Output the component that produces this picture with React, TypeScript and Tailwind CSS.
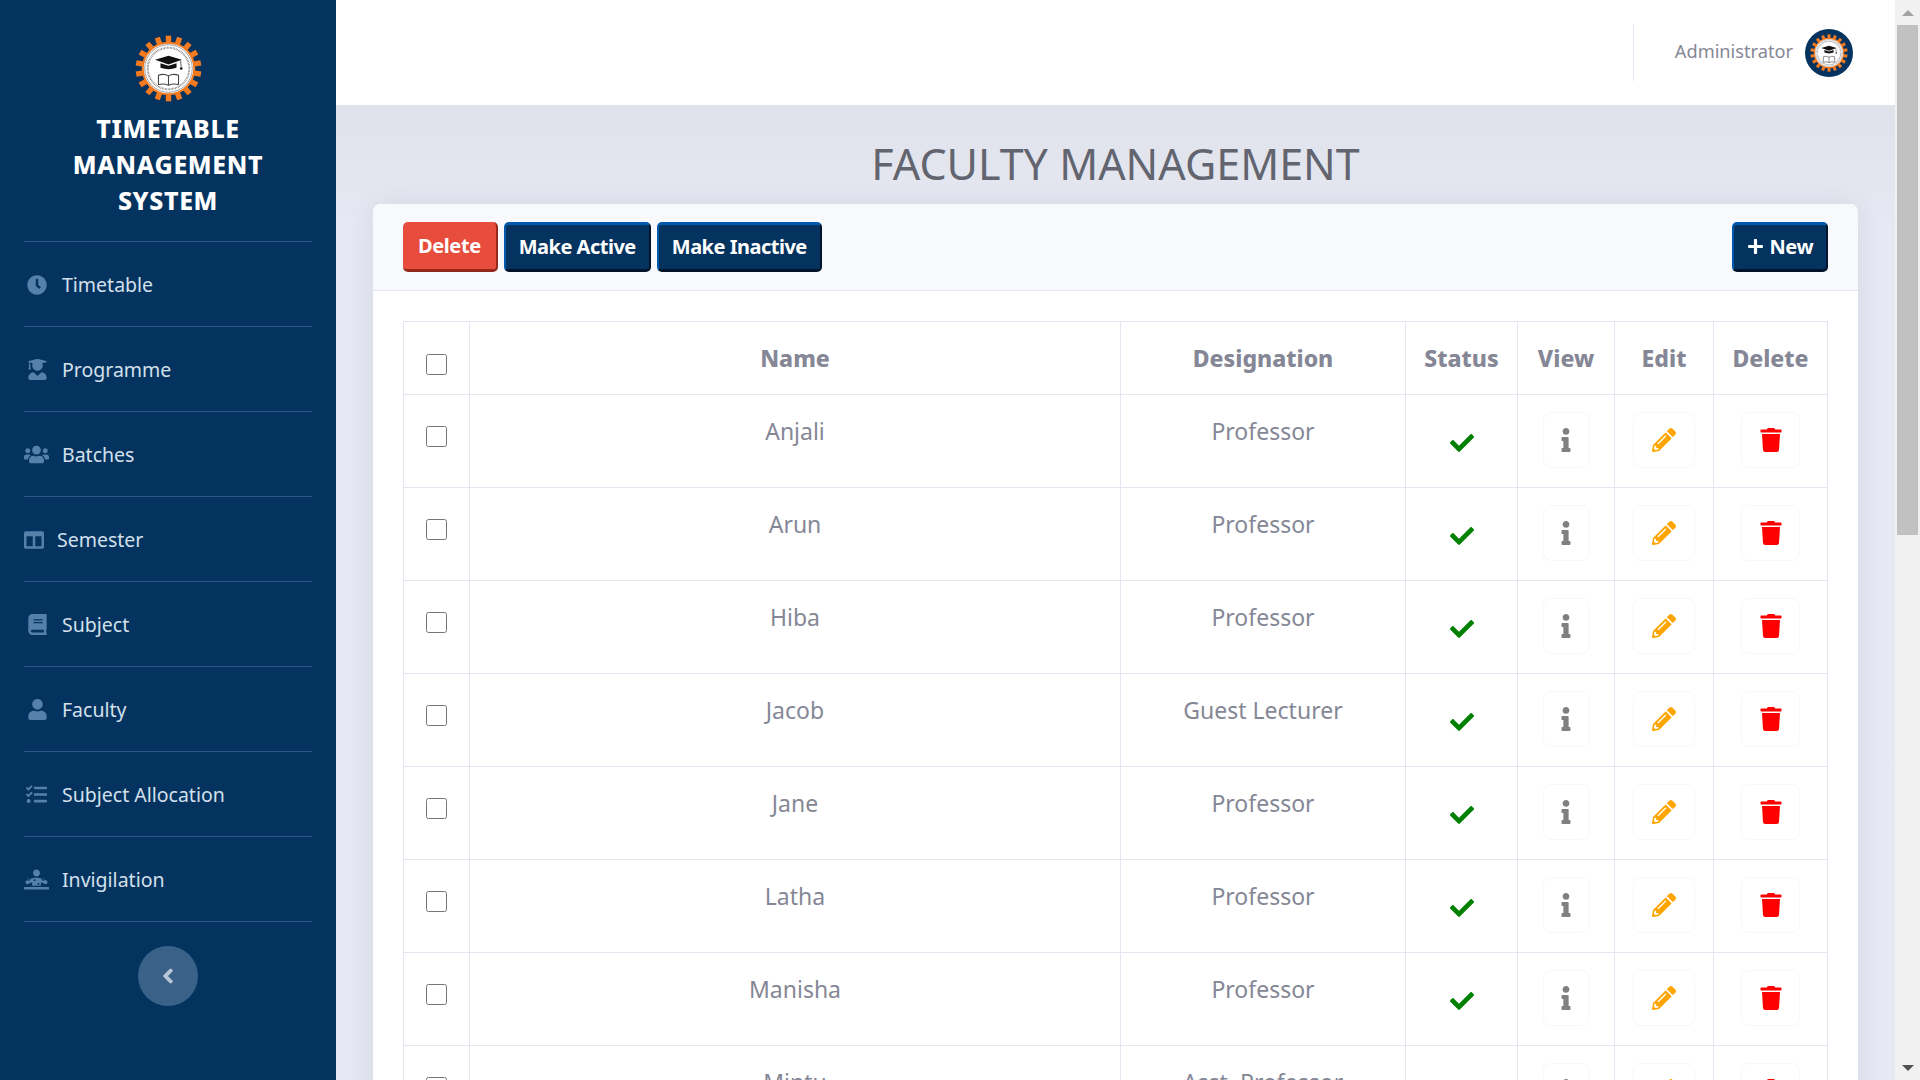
import { ReactNode } from "react";
import {
  FaBook,
  FaCheck,
  FaChevronLeft,
  FaClock,
  FaColumns,
  FaDiagnoses,
  FaInfo,
  FaPencilAlt,
  FaPlus,
  FaTasks,
  FaTrash,
  FaUser,
  FaUserGraduate,
  FaUsers,
} from "react-icons/fa";

const menu = [
  { label: "Timetable", icon: <FaClock className="h-5 w-5" />, box: "w-[38px] pl-[3px]" },
  { label: "Programme", icon: <FaUserGraduate className="h-[21px] w-[21px]" />, box: "w-[38px] pl-[3px]" },
  { label: "Batches", icon: <FaUsers className="h-[25px] w-[25px]" />, box: "w-[38px]" },
  { label: "Semester", icon: <FaColumns className="h-[20px] w-[20px]" />, box: "w-[33px]" },
  { label: "Subject", icon: <FaBook className="h-[21px] w-[21px]" />, box: "w-[38px] pl-[3px]" },
  { label: "Faculty", icon: <FaUser className="h-[21px] w-[21px]" />, box: "w-[38px] pl-[3px]" },
  { label: "Subject Allocation", icon: <FaTasks className="h-[21px] w-[21px]" />, box: "w-[38px] pl-[2px]" },
  { label: "Invigilation", icon: <FaDiagnoses className="h-[25px] w-[25px]" />, box: "w-[38px]" },
];

const faculty = [
  ["Anjali", "Professor"],
  ["Arun", "Professor"],
  ["Hiba", "Professor"],
  ["Jacob", "Guest Lecturer"],
  ["Jane", "Professor"],
  ["Latha", "Professor"],
  ["Manisha", "Professor"],
  ["Mintu", "Asst. Professor"],
];

function Logo({ size, className }: { size: number; className?: string }) {
  const teeth = Array.from({ length: 18 }, (_, i) => i * 20);
  return (
    <svg width={size} height={size} viewBox="0 0 100 100" className={className}>
      {teeth.map((deg) => (
        <rect key={deg} x="46" y="1" width="8" height="14" fill="#f47a1f" transform={`rotate(${deg} 50 50)`} />
      ))}
      <circle cx="50" cy="50" r="40" fill="#f47a1f" />
      <circle cx="50" cy="50" r="37" fill="#fff" />
      <circle cx="50" cy="50" r="35.5" fill="none" stroke="#111" strokeWidth="0.6" />
      <circle cx="50" cy="50" r="31" fill="none" stroke="#777" strokeWidth="3" strokeDasharray="1 1.2" />
      <path d="M30 37 L50 31 L70 37 L50 44 Z" fill="#111" />
      <path d="M38 42 L38 49 Q50 53 62 49 L62 42 L50 46 Z" fill="#111" />
      <path d="M68 38 L69 48" stroke="#111" strokeWidth="1" />
      <circle cx="69" cy="50" r="2" fill="#111" />
      <path
        d="M35 60 Q43 57 50 61 Q57 57 65 60 L65 74 Q57 72 50 75 Q43 72 35 74 Z M50 61 L50 75"
        fill="#fff"
        stroke="#444"
        strokeWidth="1.6"
      />
    </svg>
  );
}

function Sidebar() {
  return (
    <aside className="flex w-[336px] shrink-0 flex-col items-center bg-[#05335f]">
      <div className="flex h-[242px] w-[288px] flex-col items-center border-b border-[#2c5484] pt-[35px]">
        <Logo size={67} />
        <h1 className="mt-[8px] text-center text-[25px] font-extrabold leading-[36px] tracking-[0.6px] text-white">
          TIMETABLE
          <br />
          MANAGEMENT
          <br />
          SYSTEM
        </h1>
      </div>
      {menu.map((item) => (
        <a key={item.label} className="flex h-[85px] w-[288px] items-center border-b border-[#2c5484] pt-[1px] text-[19.5px] text-[#d3e0ec]">
          <span className={`flex shrink-0 items-center text-[#5580aa] ${item.box}`}>{item.icon}</span>
          <span className="pt-[1px]">{item.label}</span>
        </a>
      ))}
      <button className="mt-[24px] flex h-[60px] w-[60px] items-center justify-center rounded-full bg-[#3a6188] text-[#b9c8d9]">
        <FaChevronLeft className="h-4 w-4 stroke-[40]" />
      </button>
    </aside>
  );
}

function Topbar() {
  return (
    <header className="relative z-10 flex h-[105px] shrink-0 items-center justify-end bg-white pr-[42px]">
      <div className="mr-[41px] h-[57px] w-px self-center bg-[#e3e6f0]" />
      <span className="mr-[12px] pb-[2px] text-[18.2px] text-[#858796]">Administrator</span>
      <div className="flex h-[48px] w-[48px] items-center justify-center rounded-full bg-[#05335f]">
        <Logo size={38} />
      </div>
    </header>
  );
}

function ActionButton({ children, tone = "blue" }: { children: ReactNode; tone?: "blue" | "red" }) {
  return (
    <button
      className={
        tone === "red"
          ? "flex h-[50px] items-center rounded-[5px] border-r-2 border-b-[3px] border-[#96281b] bg-[#e74c3c] px-[15px] text-[20px] font-bold tracking-[-0.4px] text-white"
          : "flex h-[50px] items-center rounded-[5px] border-t-[3px] border-r-[2px] border-b-[3px] border-l-[2px] border-t-[#0059ad] border-r-[#00152b] border-b-[#00152b] border-l-[#0059ad] bg-[#05335f] px-[13px] pb-[1px] text-[20px] font-bold tracking-[-0.5px] text-white"
      }
    >
      {children}
    </button>
  );
}

function IconBox({ children, width }: { children: ReactNode; width: string }) {
  return (
    <div className={`mx-auto mt-[-4px] flex h-[56px] items-center justify-center rounded-[8px] border border-[#f8f8fa] ${width}`}>
      {children}
    </div>
  );
}

function FacultyTable() {
  const th = "border border-[#e3e6f0] text-center text-[23px] font-extrabold text-[#858796] align-middle";
  const td = "border border-[#e3e6f0] h-[93px] p-0 pt-[21px] align-top text-center text-[23px] leading-[30px] text-[#858796]";
  return (
    <table className="w-[1424px] table-fixed border-collapse">
      <colgroup>
        <col className="w-[66px]" />
        <col className="w-[651px]" />
        <col className="w-[285px]" />
        <col className="w-[112px]" />
        <col className="w-[97px]" />
        <col className="w-[99px]" />
        <col className="w-[114px]" />
      </colgroup>
      <thead>
        <tr className="h-[73px]">
          <th className={th}>
            <input type="checkbox" className="mt-[8px] h-[21px] w-[21px] align-middle" />
          </th>
          <th className={th}>Name</th>
          <th className={th}>Designation</th>
          <th className={th}>Status</th>
          <th className={th}>View</th>
          <th className={th}>Edit</th>
          <th className={th}>Delete</th>
        </tr>
      </thead>
      <tbody>
        {faculty.map(([name, role]) => (
          <tr key={name}>
            <td className={td}>
              <input type="checkbox" className="mt-[6px] h-[21px] w-[21px] align-middle" />
            </td>
            <td className={td}>{name}</td>
            <td className={td}>{role}</td>
            <td className={td}>
              <FaCheck className="mx-auto mt-[15px] h-6 w-6 text-[#008000]" />
            </td>
            <td className={td}>
              <IconBox width="w-[47px]">
                <FaInfo className="h-6 w-6 text-[#808080]" />
              </IconBox>
            </td>
            <td className={td}>
              <IconBox width="w-[62px]">
                <FaPencilAlt className="h-6 w-6 text-[#ffa500]" />
              </IconBox>
            </td>
            <td className={td}>
              <IconBox width="w-[59px]">
                <FaTrash className="h-6 w-6 text-[#ff0000]" />
              </IconBox>
            </td>
          </tr>
        ))}
      </tbody>
    </table>
  );
}

function Scrollbar() {
  return (
    <div className="flex w-[25px] shrink-0 flex-col items-center bg-[#f1f1f1]">
      <div className="flex h-[25px] items-center justify-center">
        <div className="h-0 w-0 border-x-[6px] border-b-[6px] border-x-transparent border-b-[#a3a3a3]" />
      </div>
      <div className="h-[510px] w-[21px] bg-[#c1c1c1]" />
      <div className="flex-1" />
      <div className="flex h-[25px] items-center justify-center">
        <div className="h-0 w-0 border-x-[6px] border-t-[6px] border-x-transparent border-t-[#505050]" />
      </div>
    </div>
  );
}

export default function App() {
  return (
    <div className="flex h-screen overflow-hidden font-['Noto_Sans',sans-serif]">
      <Sidebar />
      <div className="flex min-w-0 flex-1 flex-col overflow-hidden bg-[#e4e7f1]">
        <Topbar />
        <main className="flex-1 overflow-hidden bg-gradient-to-b from-[#dfe2ea] to-[#e6e9f3] to-[120px] px-[37px]">
          <h2 className="mt-[31px] mb-[13px] text-center text-[43px] leading-[55px] text-[#62646f]">FACULTY MANAGEMENT</h2>
          <section className="rounded-[8px] bg-white shadow-[0_2px_28px_rgba(58,59,69,0.1)]">
            <div className="flex h-[87px] items-center justify-between rounded-t-[8px] border-b border-[#e3e6f0] bg-[#f8f9fc] px-[30px]">
              <div className="flex gap-[6px]">
                <ActionButton tone="red">Delete</ActionButton>
                <ActionButton>Make Active</ActionButton>
                <ActionButton>Make Inactive</ActionButton>
              </div>
              <ActionButton>
                <FaPlus className="mr-[6px] h-[17px] w-[17px]" />
                New
              </ActionButton>
            </div>
            <div className="px-[30px] pt-[30px]">
              <FacultyTable />
            </div>
          </section>
        </main>
      </div>
      <Scrollbar />
    </div>
  );
}
